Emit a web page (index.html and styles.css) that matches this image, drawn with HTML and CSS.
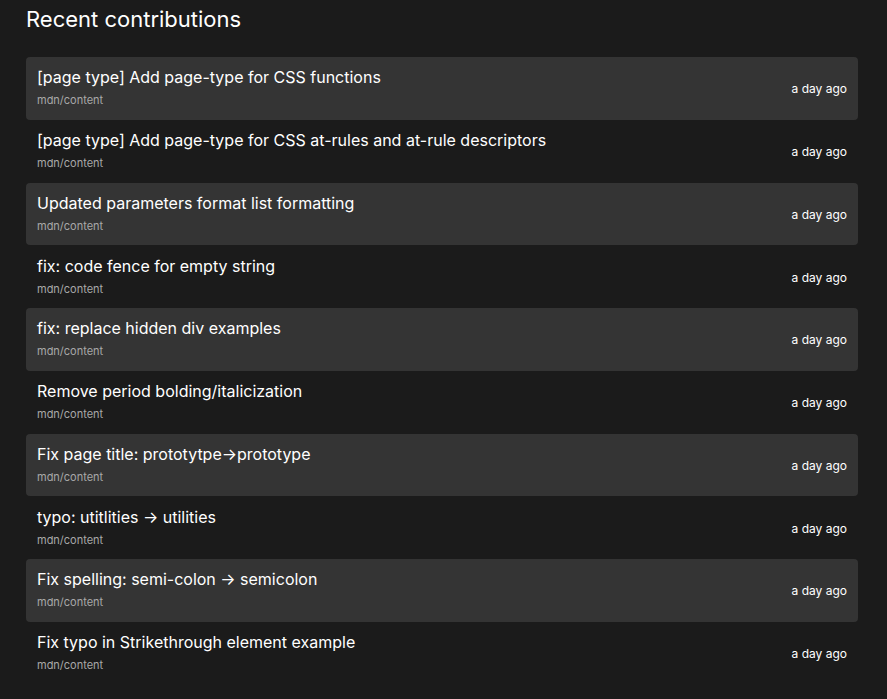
FILE: index.html
```html
<!DOCTYPE html>
<html lang="en">
<head>
<meta charset="utf-8">
<title>Recent contributions</title>
<link rel="stylesheet" href="styles.css">
</head>
<body>
<main class="page">
  <h2 class="heading">Recent contributions</h2>
  <ul class="list">
    <li class="item"><div class="info"><span class="title">[page type] Add page-type for CSS functions</span><span class="repo">mdn/content</span></div><span class="date">a day ago</span></li>
    <li class="item"><div class="info"><span class="title">[page type] Add page-type for CSS at-rules and at-rule descriptors</span><span class="repo">mdn/content</span></div><span class="date">a day ago</span></li>
    <li class="item"><div class="info"><span class="title">Updated parameters format list formatting</span><span class="repo">mdn/content</span></div><span class="date">a day ago</span></li>
    <li class="item"><div class="info"><span class="title">fix: code fence for empty string</span><span class="repo">mdn/content</span></div><span class="date">a day ago</span></li>
    <li class="item"><div class="info"><span class="title">fix: replace hidden div examples</span><span class="repo">mdn/content</span></div><span class="date">a day ago</span></li>
    <li class="item"><div class="info"><span class="title">Remove period bolding/italicization</span><span class="repo">mdn/content</span></div><span class="date">a day ago</span></li>
    <li class="item"><div class="info"><span class="title">Fix page title: prototytpe→prototype</span><span class="repo">mdn/content</span></div><span class="date">a day ago</span></li>
    <li class="item"><div class="info"><span class="title">typo: utitlities → utilities</span><span class="repo">mdn/content</span></div><span class="date">a day ago</span></li>
    <li class="item"><div class="info"><span class="title">Fix spelling: semi-colon → semicolon</span><span class="repo">mdn/content</span></div><span class="date">a day ago</span></li>
    <li class="item"><div class="info"><span class="title">Fix typo in Strikethrough element example</span><span class="repo">mdn/content</span></div><span class="date">a day ago</span></li>
  </ul>
</main>
</body>
</html>
```
FILE: styles.css
```css
html, body {
  margin: 0;
  padding: 0;
  background: #1b1b1b;
  color: #ffffff;
  font-family: Inter, "Noto Sans", sans-serif;
}

.page {
  padding: 0 29px 0 26px;
}

.heading {
  margin: 0;
  padding-top: 4px;
  font-size: 22px;
  font-weight: 400;
  line-height: 30px;
  color: #ffffff;
}

.list {
  list-style: none;
  margin: 23px 0 0;
  padding: 0;
}

.item {
  display: flex;
  align-items: center;
  justify-content: space-between;
  height: 62.75px;
  box-sizing: border-box;
  padding: 0 11px 0 11px;
  border-radius: 4px;
}

.item:nth-child(odd) {
  background: #343434;
}

.info {
  display: flex;
  flex-direction: column;
  gap: 3px;
  padding-bottom: 3px;
}

.title {
  font-size: 16px;
  line-height: 24px;
  color: #ffffff;
}

.repo {
  font-size: 11px;
  line-height: 16px;
  color: #a8a8a8;
}

.date {
  margin-top: 2px;
  font-size: 12px;
  line-height: 16px;
  color: #ffffff;
}
```
